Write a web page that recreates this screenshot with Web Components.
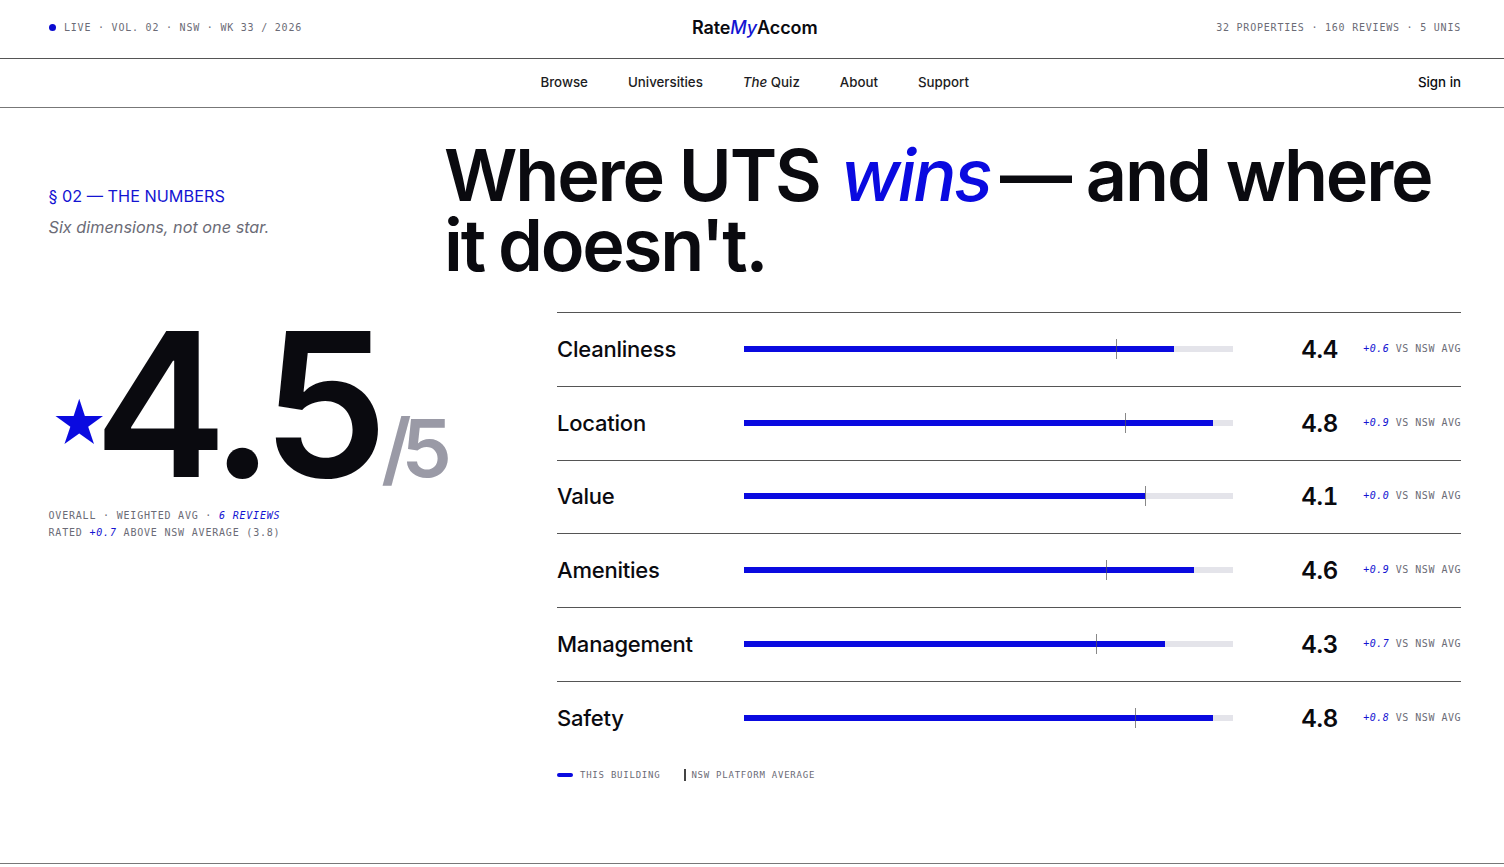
<!DOCTYPE html>
<html>
<head>
<meta charset="utf-8">
<title>RateMyAccom</title>
<style>
  html, body { margin: 0; padding: 0; background: #fff; }
  body { font-family: Inter, sans-serif; color: #0a0a0f; }
</style>
</head>
<body>
<site-masthead></site-masthead>
<site-nav></site-nav>
<numbers-section></numbers-section>

<script>
const MONO = "'DejaVu Sans Mono', monospace";

class SiteMasthead extends HTMLElement {
  constructor() {
    super();
    this.root = this.attachShadow({ mode: 'open' });
    this.root.innerHTML = `
    <style>
      :host { display: grid; grid-template-columns: 1fr auto 1fr; align-items: center; height: 58px; padding: 0 43px 0 48.5px; border-bottom: 1px solid #555; }
      .meta { font: 10px ${MONO}; letter-spacing: 0.078em; color: #6b6b76; white-space: nowrap; margin-bottom: 3px; }
      .live { display: flex; align-items: center; gap: 8px; }
      .dot { width: 7.5px; height: 7.5px; border-radius: 50%; background: #0a0ad0; }
      .right { text-align: right; }
      .logo { font-size: 18px; font-weight: 600; letter-spacing: -0.005em; margin-bottom: 4px; }
      .logo em { color: #1414d2; font-weight: 500; }
    </style>
    <div class="meta live"><span class="dot"></span><span>LIVE · VOL. 02 · NSW · WK 33 / 2026</span></div>
    <div class="logo">Rate<em>My</em>Accom</div>
    <div class="meta right">32 PROPERTIES · 160 REVIEWS · 5 UNIS</div>
    `;
  }
}
customElements.define('site-masthead', SiteMasthead);

class SiteNav extends HTMLElement {
  constructor() {
    super();
    this.root = this.attachShadow({ mode: 'open' });
    this.root.innerHTML = `
    <style>
      :host { display: grid; grid-template-columns: 1fr auto 1fr; align-items: center; height: 48px; padding: 0 43px 0 48.5px; border-bottom: 1px solid #777; font-size: 13.3px; font-weight: 500; color: #1c1c22; }
      nav { display: flex; gap: 40px; margin-bottom: 3px; }
      .signin { text-align: right; color: #0a0a0f; margin-bottom: 3px; }
    </style>
    <div></div>
    <nav>
      <span>Browse</span><span>Universities</span><span><em>The</em> Quiz</span><span>About</span><span>Support</span>
    </nav>
    <div class="signin">Sign in</div>
    `;
  }
}
customElements.define('site-nav', SiteNav);

class RatingRow extends HTMLElement {
  constructor() {
    super();
    this.root = this.attachShadow({ mode: 'open' });
  }
  connectedCallback() {
    const score = parseFloat(this.getAttribute('score'));
    const delta = parseFloat(this.getAttribute('delta'));
    const fill = score / 5 * 100;
    const avg = (score - delta) / 5 * 100;
    this.root.innerHTML = `
    <style>
      :host { display: grid; grid-template-columns: 187px 489px 105px 1fr; align-items: center; height: 72.8px; border-top: 1px solid #555; }
      .label { font-size: 22px; font-weight: 500; letter-spacing: -0.01em; color: #0a0a0f; margin-bottom: 1px; }
      .track { position: relative; height: 6px; background: #e4e4ea; margin-bottom: 1px; }
      .fill { height: 100%; background: #0a0ae0; width: ${fill}%; }
      .avg { position: absolute; top: -7px; height: 20px; width: 1px; background: #555; opacity: .7; left: ${avg}%; }
      .score { font-size: 24px; font-weight: 600; text-align: right; letter-spacing: -0.01em; font-variant-numeric: tabular-nums; }
      .delta { font: 10px ${MONO}; letter-spacing: 0.05em; color: #6b6b76; text-align: right; white-space: nowrap; margin-bottom: 2px; }
      .delta em { color: #1414d2; }
    </style>
    <div class="label">${this.getAttribute('label')}</div>
    <div class="track"><div class="fill"></div><div class="avg"></div></div>
    <div class="score">${score.toFixed(1)}</div>
    <div class="delta"><em>+${delta.toFixed(1)}</em> VS NSW AVG</div>
    `;
  }
}
customElements.define('rating-row', RatingRow);

class NumbersSection extends HTMLElement {
  constructor() {
    super();
    this.root = this.attachShadow({ mode: 'open' });
    this.root.innerHTML = `
    <style>
      :host { display: block; box-sizing: border-box; height: 756px; padding: 32px 43px 0 48.5px; border-bottom: 1px solid #777; }
      .head { display: grid; grid-template-columns: 395.5px 1fr; }
      .eyebrow { margin-top: 46px; font-size: 16.25px; color: #1414d2; }
      .sub { margin-top: 11px; font-size: 16.25px; font-style: italic; color: #6b6b76; }
      h1 { margin: 0; font-size: 72px; line-height: 70px; font-weight: 600; letter-spacing: -0.03em; color: #0a0a0f; }
      h1 em { color: #0a0ae0; font-weight: 500; letter-spacing: -0.037em; padding: 0 10px 0 5px; }
      .tail { word-spacing: -2px; }
      .body { display: grid; grid-template-columns: 508.5px 1fr; margin-top: 32px; }
      .big { height: 190px; white-space: nowrap; line-height: 185px; font-size: 200px; font-weight: 600; letter-spacing: -10px; }
      .star { font-size: 55px; color: #0a0ae0; vertical-align: 33px; margin: 0 -4px 0 2px; }
      .of { font-size: 80px; font-weight: 600; color: #9a9aa6; margin-left: 3px; }
      .note { margin-top: 5px; font: 10px/17px ${MONO}; letter-spacing: 0.08em; color: #6b6b76; }
      .note em { color: #1414d2; }
      .legend { display: flex; align-items: center; margin-top: 14px; font: 9px ${MONO}; letter-spacing: 0.085em; color: #6b6b76; }
      .swatch { width: 16px; height: 4px; background: #0a0ae0; border-radius: 2px; margin-right: 7px; }
      .tick { width: 2px; height: 12px; background: #444; margin: 0 5px 0 24px; }
    </style>
    <div class="head">
      <div>
        <div class="eyebrow">§ 02 — THE NUMBERS</div>
        <div class="sub">Six dimensions, not one star.</div>
      </div>
      <h1>Where UTS <em>wins</em>— and where <span class="tail">it doesn't.</span></h1>
    </div>
    <div class="body">
      <div>
        <div class="big"><span class="star">★</span>4.5<span class="of">/5</span></div>
        <div class="note">OVERALL · WEIGHTED AVG · <em>6 REVIEWS</em><br>RATED <em>+0.7</em> ABOVE NSW AVERAGE (3.8)</div>
      </div>
      <div class="rows">
        <rating-row label="Cleanliness" score="4.4" delta="0.6"></rating-row>
        <rating-row label="Location" score="4.8" delta="0.9"></rating-row>
        <rating-row label="Value" score="4.1" delta="0.0"></rating-row>
        <rating-row label="Amenities" score="4.6" delta="0.9"></rating-row>
        <rating-row label="Management" score="4.3" delta="0.7"></rating-row>
        <rating-row label="Safety" score="4.8" delta="0.8"></rating-row>
        <div class="legend"><span class="swatch"></span>THIS BUILDING<span class="tick"></span>NSW PLATFORM AVERAGE</div>
      </div>
    </div>
    `;
  }
}
customElements.define('numbers-section', NumbersSection);
</script>
</body>
</html>
